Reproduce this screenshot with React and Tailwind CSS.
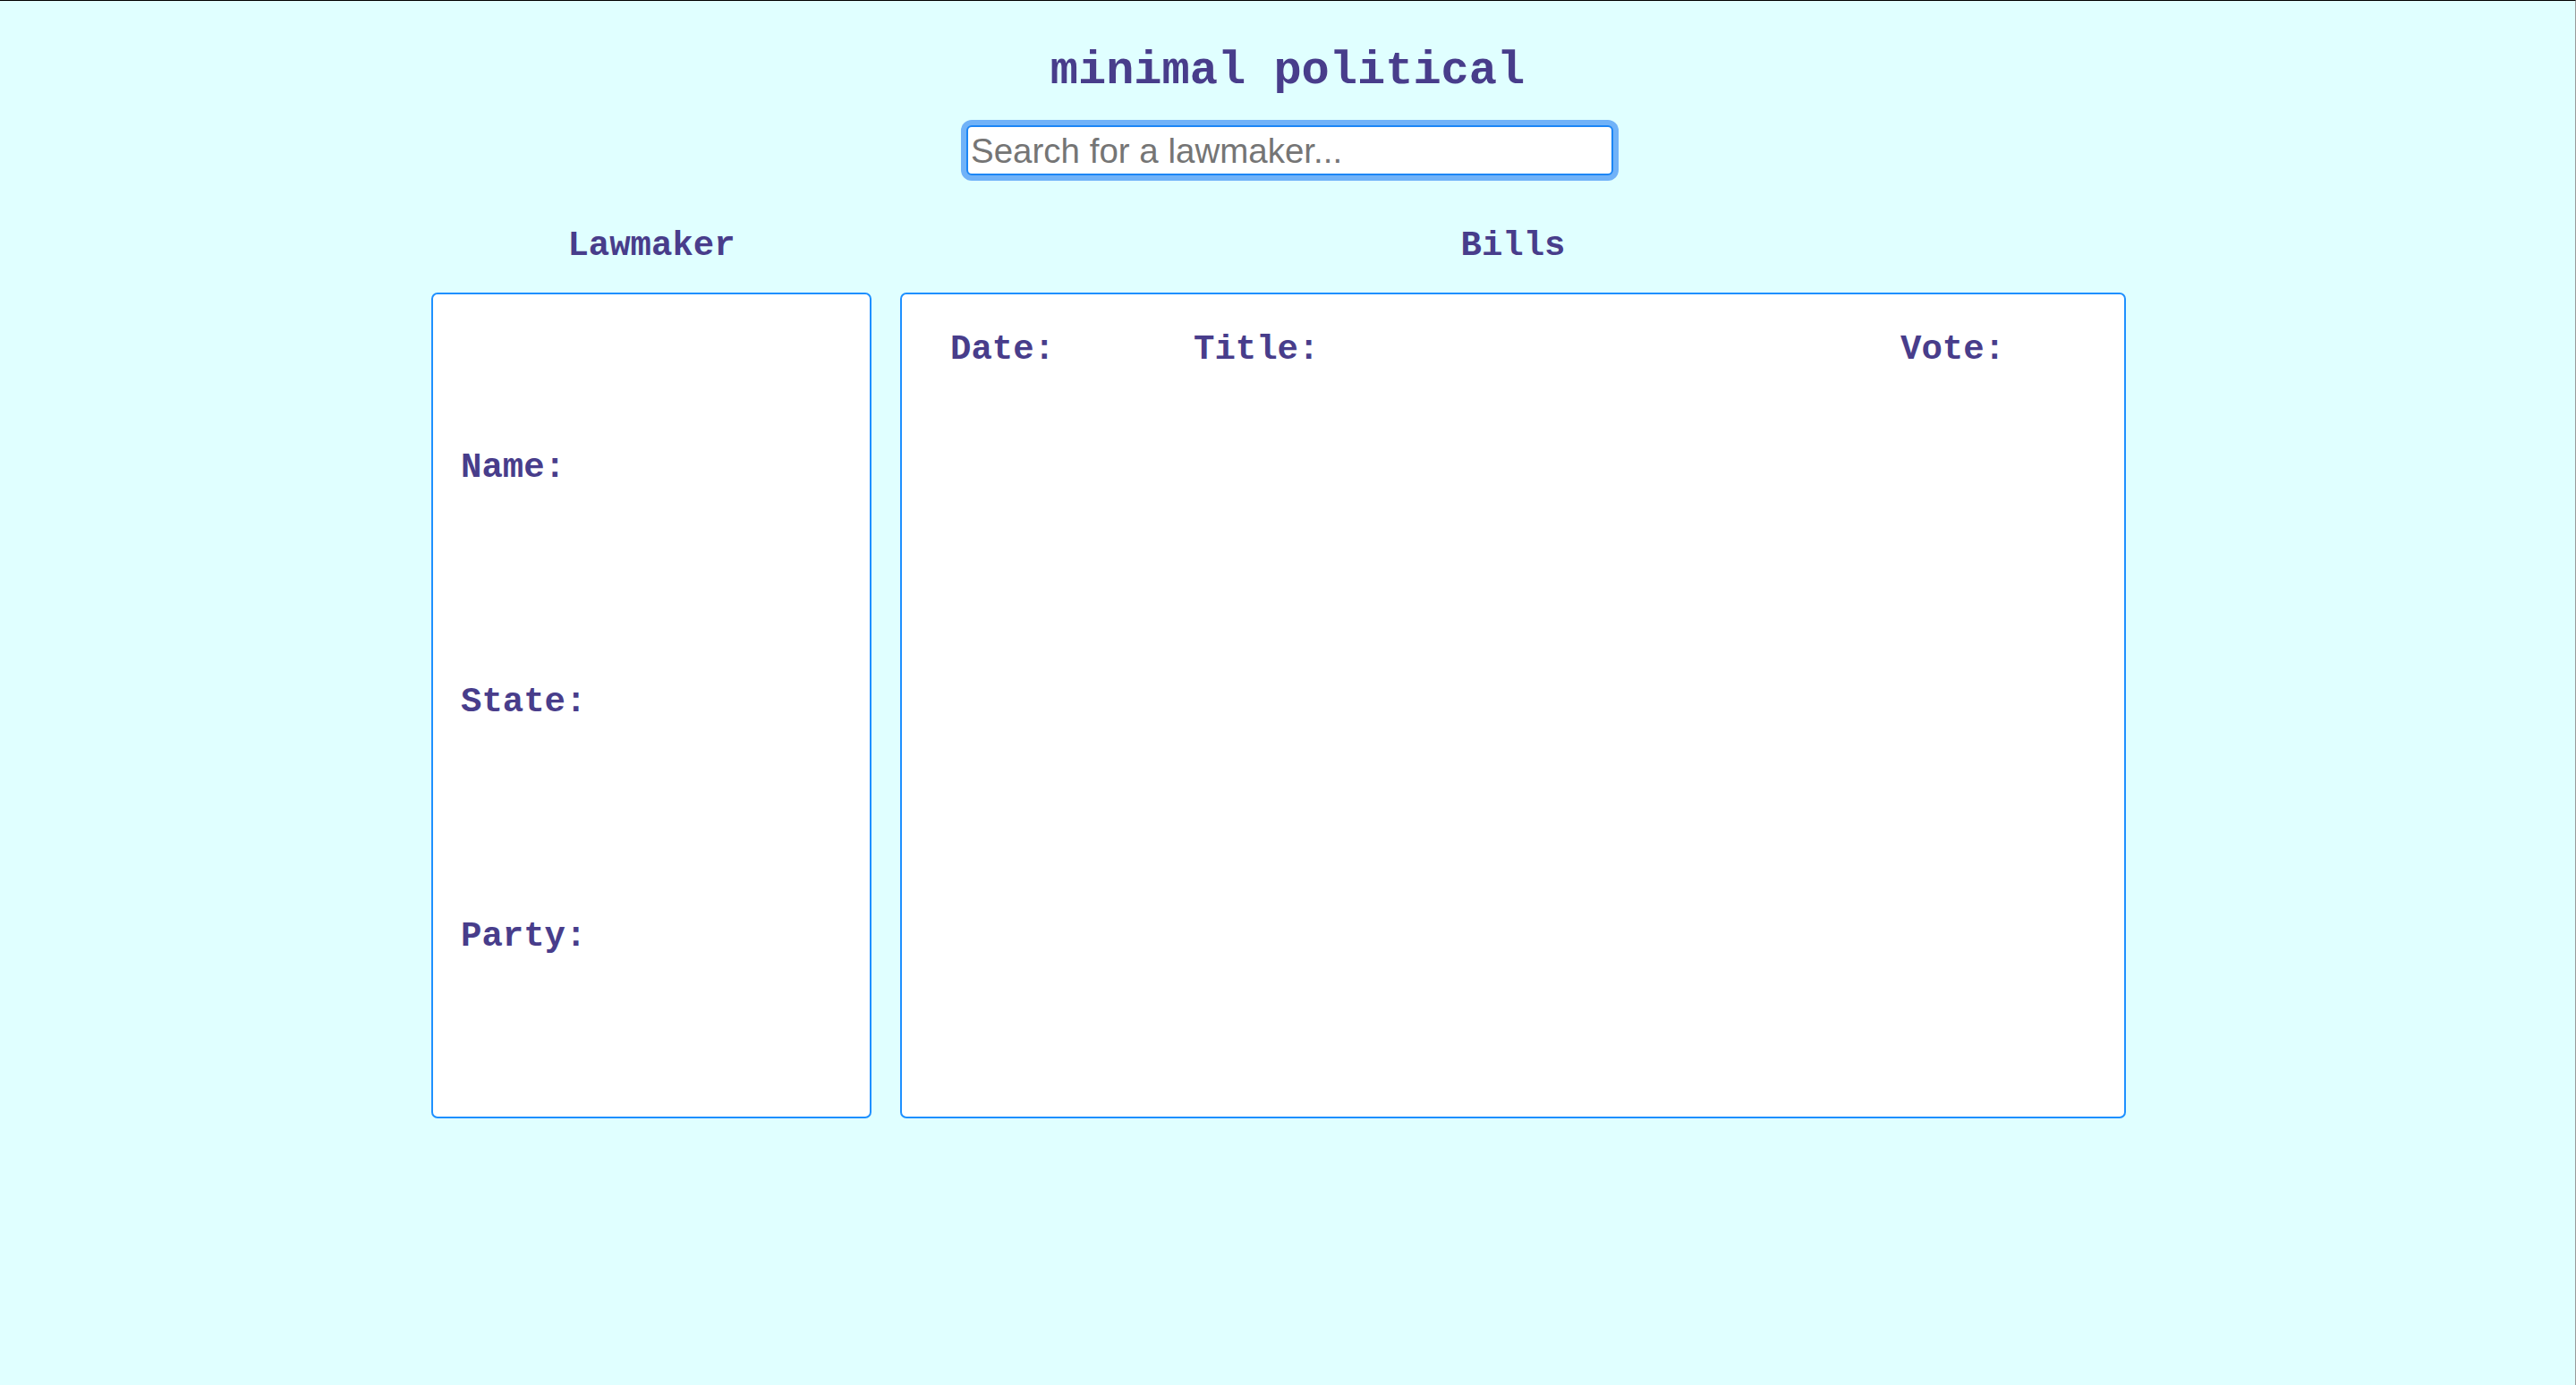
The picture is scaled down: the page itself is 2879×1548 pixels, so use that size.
export default function App() {
  return (
    <div className="min-h-screen bg-[#e0ffff] border-t border-t-black border-r border-r-[#9a9a9a] flex flex-col items-center font-['Liberation_Mono','Courier_New',monospace] font-bold text-[#483d8b]">
      <h1 className="mt-[53px] text-[52px] leading-none">minimal political</h1>
      <div className="mt-[34px] ml-[5px] rounded-[10px]">
        <input
          type="text"
          placeholder="Search for a lawmaker..."
          className="block w-[723px] h-[56px] bg-white border-2 border-[#1c86f5] rounded-[6px] ring-[6px] ring-[#70b2f8] pl-[3px] pr-[2px] pt-[2px] font-['Liberation_Sans',Arial,sans-serif] font-normal text-[38.5px] text-[#333] placeholder:text-[#757575] outline-none"
        />
      </div>
      <div className="mt-[60px] mr-[20px] flex gap-[32px]">
        <div className="w-[492px] flex flex-col items-center">
          <h2 className="text-[39px] leading-none">Lawmaker</h2>
          <div className="mt-[32px] w-full h-[923px] bg-white border-2 border-[#1e90ff] rounded-[7px] flex flex-col pt-[175px] pl-[31px] gap-[223px]">
            <div className="text-[39px] leading-none">Name:</div>
            <div className="text-[39px] leading-none">State:</div>
            <div className="text-[39px] leading-none">Party:</div>
          </div>
        </div>
        <div className="w-[1370px] flex flex-col items-center">
          <h2 className="text-[39px] leading-none">Bills</h2>
          <div className="mt-[32px] w-full h-[923px] bg-white border-2 border-[#1e90ff] rounded-[7px] pt-[43px] pl-[54px]">
            <div className="flex text-[39px] leading-none">
              <div className="w-[272px]">Date:</div>
              <div className="w-[790px]">Title:</div>
              <div>Vote:</div>
            </div>
          </div>
        </div>
      </div>
    </div>
  );
}
